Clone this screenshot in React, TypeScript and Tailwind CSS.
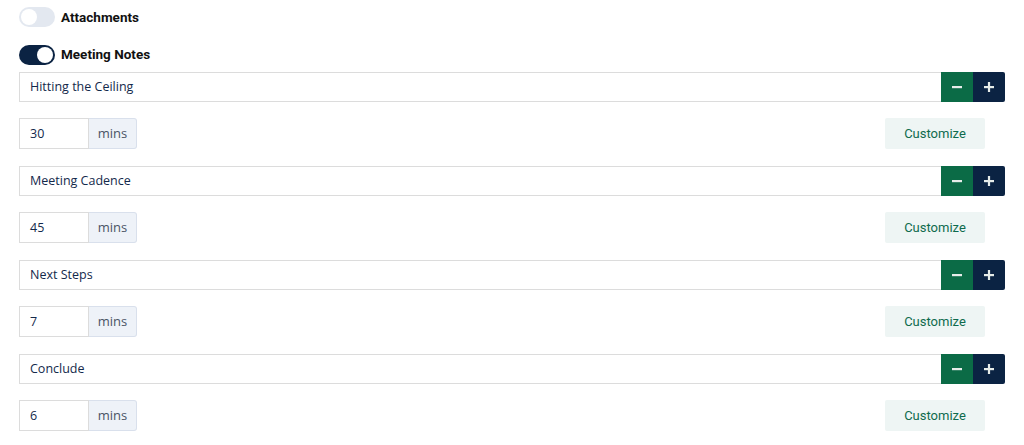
import React from "react";

const items = [
  { title: "Hitting the Ceiling", mins: "30" },
  { title: "Meeting Cadence", mins: "45" },
  { title: "Next Steps", mins: "7" },
  { title: "Conclude", mins: "6" },
];

function Toggle({ on }: { on: boolean }) {
  return (
    <div
      className={`w-[36px] h-[20px] rounded-full p-[2px] flex items-center ${
        on ? "bg-[#0b2343] justify-end" : "bg-[#e3e8f0] justify-start"
      }`}
    >
      <div className="w-[16px] h-[16px] rounded-full bg-white" />
    </div>
  );
}

export default function App() {
  return (
    <div
      className="w-[1024px] h-[445px] bg-white px-[19px] overflow-hidden"
      style={{ fontFamily: '"Open Sans", "Noto Sans", sans-serif' }}
    >
      <div className="flex items-center gap-[6px] pt-[7px] h-[27px]">
        <Toggle on={false} />
        <span className="text-[13.5px] font-bold text-[#111] font-['Roboto',sans-serif]">Attachments</span>
      </div>
      <div className="flex items-center gap-[6px] mt-[17px] h-[21px]">
        <Toggle on={true} />
        <span className="text-[13.5px] font-bold text-[#111] font-['Roboto',sans-serif]">Meeting Notes</span>
      </div>
      <div className="mt-[7px] flex flex-col gap-[17px]">
        {items.map((it) => (
          <div key={it.title} className="flex flex-col gap-[16px]">
            <div className="flex h-[30px]">
              <div className="flex-1 border border-[#dcdcdc] border-r-0 flex items-center pl-[10px] pt-[1px] text-[12.5px] text-[#13294b]">
                {it.title}
              </div>
              <button className="w-[32px] h-[30px] bg-[#0b6b46] flex items-center justify-center">
                <svg width="12" height="12" viewBox="0 0 12 12">
                  <rect x="1" y="5" width="10" height="2.2" fill="#e6ece9" />
                </svg>
              </button>
              <button className="w-[32px] h-[30px] bg-[#0b2343] rounded-r-[2px] flex items-center justify-center">
                <svg width="12" height="12" viewBox="0 0 12 12">
                  <rect x="1" y="5" width="10" height="2.2" fill="#e6ece9" />
                  <rect x="4.9" y="1" width="2.2" height="10" fill="#e6ece9" />
                </svg>
              </button>
            </div>
            <div className="flex items-center justify-between pr-[20px]">
              <div className="flex h-[31px]">
                <div className="w-[70px] border border-[#dcdcdc] flex items-center pl-[10px] pt-[1px] text-[12.5px] text-[#13294b]">
                  {it.mins}
                </div>
                <div className="w-[48px] bg-[#eef2f8] border border-[#d9e0ec] border-l-0 rounded-r-[3px] flex items-center justify-center pt-[1px] text-[13px] text-[#4a5566]">
                  mins
                </div>
              </div>
              <button className="w-[100px] h-[31px] bg-[#eef5f4] rounded-[2px] pt-[1px] text-[13px] text-[#0e6b4d] font-['Roboto',sans-serif]">
                Customize
              </button>
            </div>
          </div>
        ))}
      </div>
    </div>
  );
}
